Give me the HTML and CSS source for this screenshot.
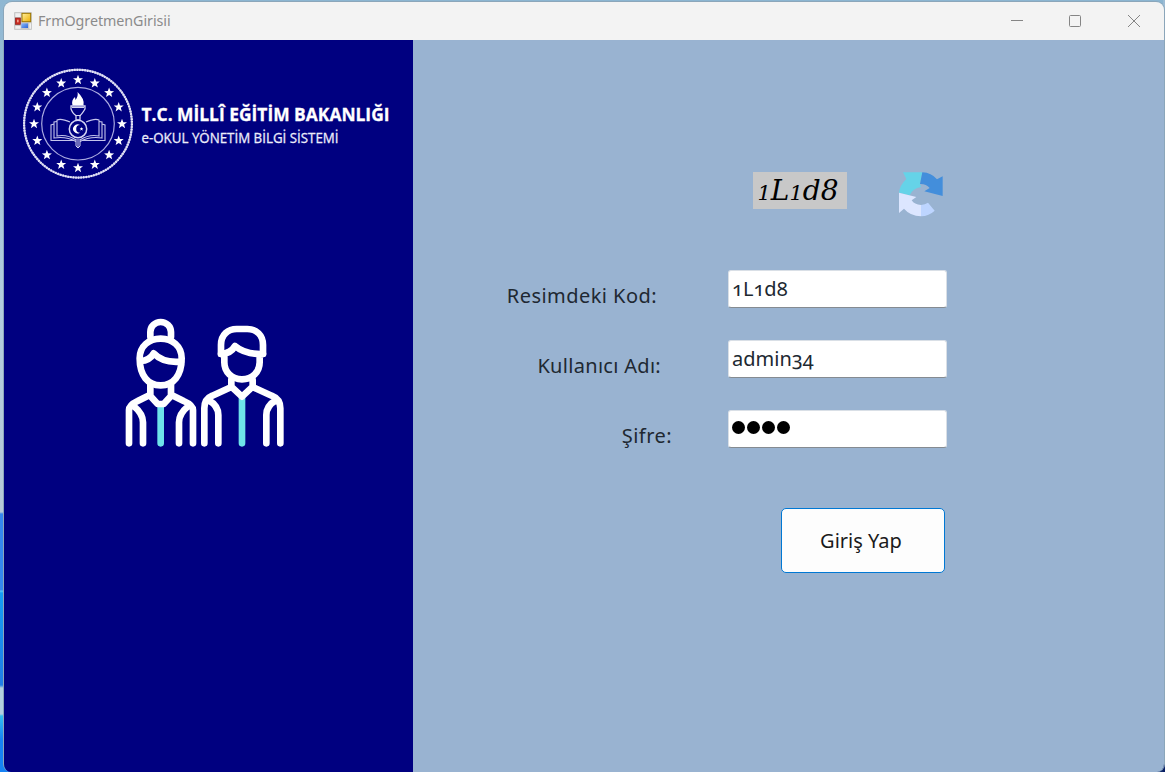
FILE: index.html
```html
<!DOCTYPE html>
<html lang="tr">
<head>
<meta charset="utf-8">
<title>FrmOgretmenGirisii</title>
<link rel="stylesheet" href="styles.css">
</head>
<body>
<div class="window">
  <header class="titlebar">
    <svg class="app-icon" width="18" height="18" viewBox="0 0 54 54">
      <defs>
        <linearGradient id="gold" x2="1" y2="1"><stop stop-color="#fff0a0"/><stop offset="1" stop-color="#edae00"/></linearGradient>
        <linearGradient id="blue" x2="1" y2="1"><stop stop-color="#8bb8fa"/><stop offset="1" stop-color="#2d66d8"/></linearGradient>
      </defs>
      <rect width="54" height="54" rx="3" fill="#c9c9c9"/>
      <path d="M4 4h16v11H4zM4 42h16v8H4zM46 34h5v16h-5z" fill="#f0f0f0"/>
      <rect x="24" y="4" width="26" height="25" fill="url(#gold)" stroke="#a07800" stroke-width="3"/>
      <rect x="4" y="18" width="15" height="19" fill="#c62a20" stroke="#8c1c18" stroke-width="2"/>
      <rect x="9" y="23" width="5" height="8" fill="#f0a090"/>
      <rect x="22" y="34" width="20" height="14" fill="url(#blue)"/>
    </svg>
    <span class="title">FrmOgretmenGirisii</span>
    <svg class="controls" width="130" height="14" viewBox="0 0 130 14" fill="none" stroke="#858585">
      <path d="M0 6.500h12"/>
      <rect x="58.500" y="1.500" width="11" height="11" rx="1"/>
      <path d="M117 1l12 12M129 1l-12 12"/>
    </svg>
  </header>
  <div class="content">
    <aside class="sidebar">
      <svg class="brand" width="390" height="125" viewBox="0 0 390 125">
        <defs><path id="star" d="M0-5.200 1.300-1.700 5-1.600 2.100.7 3.100 4.300 0 2.200-3.100 4.300-2.100.7-5-1.600-1.300-1.700Z"/></defs>
        <g fill="none" stroke="#e7e7f7">
          <circle cx="63" cy="63.700" r="53.900" stroke-width="1.900" stroke="#b9b9e2"/>
          <circle cx="63" cy="63.700" r="53.900" stroke-width="2.200" stroke-dasharray="1.500 1.100"/>
          <circle cx="63" cy="63.700" r="36.300" stroke-width="1.200" stroke="#aaaae0"/>
        </g>
        <g fill="#fff" transform="translate(63 63.900)">
          <use href="#star" x="0" y="-44"/><use href="#star" x="16.800" y="-40.700"/><use href="#star" x="31.100" y="-31.100"/><use href="#star" x="40.700" y="-16.800"/>
          <use href="#star" x="44" y="0"/><use href="#star" x="40.700" y="16.800"/><use href="#star" x="31.100" y="31.100"/><use href="#star" x="16.800" y="40.700"/>
          <use href="#star" x="0" y="44"/><use href="#star" x="-16.800" y="40.700"/><use href="#star" x="-31.100" y="31.100"/><use href="#star" x="-40.700" y="16.800"/>
          <use href="#star" x="-44" y="0"/><use href="#star" x="-40.700" y="-16.800"/><use href="#star" x="-31.100" y="-31.100"/><use href="#star" x="-16.800" y="-40.700"/>
        </g>
        <g fill="none" stroke="#c5c5ec" stroke-width="1.100">
          <path d="M55 62Q46 58 42 60V76Q52 74 61 80M71 62Q80 58 84 60V76Q74 74 65 80"/>
          <path d="M42 61.500 39 62V78Q51 76 61 81.500M84 61.500 87 62V78Q75 76 65 81.500M39 64 36 65V80.500H59M87 64 90 65V80.500H67"/>
        </g>
        <circle cx="63" cy="69" r="8.700" fill="#000080" stroke="#d5d5f2" stroke-width="1.500"/>
        <path d="M65 65.100a4.500 4.500 0 1 0 0 7.600 3.800 3.800 0 1 1 0-7.600z" fill="#fff"/>
        <use href="#star" transform="translate(66.500 69) scale(.38)" fill="#fff"/>
        <path d="M62.500 32Q70 39 68.500 45.500H57.500Q56 40 60 37L60.500 40Q63.500 36 62.500 32Z" fill="#fff"/>
        <path d="M56 46H70V49Q67 54 65 55.500V60H61V55.500Q58 54 56 49Z" fill="none" stroke="#d5d5f2" stroke-width="1.300"/>
        <path d="M57 47.500H69M60 55.500H66M61 79V86L63 88 65 86V79M63 79V87" fill="none" stroke="#d5d5f2"/>
        <g class="brand-text" fill="#fff">
          <text class="ministry" x="126.500" y="60.800" textLength="248" lengthAdjust="spacingAndGlyphs">T.C. MİLLÎ EĞİTİM BAKANLIĞI</text>
          <text class="system" x="126.500" y="82.800" textLength="197" lengthAdjust="spacingAndGlyphs">e-OKUL YÖNETİM BİLGİ SİSTEMİ</text>
        </g>
      </svg>
      <svg class="teachers" width="180" height="145" viewBox="0 0 540 435" fill="none" stroke="#fff" stroke-width="20" stroke-linecap="round" stroke-linejoin="round">
        <path d="M137 290V400M381 265V400" stroke="#6ee3ea"/>
        <path d="M106 80V66a31 30 0 0 1 62 0V80"/>
        <path d="M74 145C74 108 102 86 137 86S200 108 200 145C200 197 175 226 137 226S74 197 74 145Z"/>
        <path d="M76 153Q104 152 116 130Q144 160 198 155"/>
        <path d="M106 222V254L68 273Q42 285 42 300V400M168 222V254L206 273Q234 285 234 300V400M106 258L128 282H146L168 258M56 288Q84 311 84 337V400M220 288Q192 311 192 337V400"/>
        <path d="M318 132V105C318 73 340 57 365 57H397C424 57 444 75 444 105V132"/>
        <path d="M318 132Q347 131 360 108Q391 134 444 132M328 136V157C328 186 350 208 381 208S434 186 434 157V136"/>
        <path d="M349 209V231L292 257Q268 267 268 295V400M413 209V231L470 257Q496 267 496 295V400M349 230 381 260 413 230M280 270Q310 287 310 315V400M484 270Q454 287 454 315V400"/>
      </svg>
    </aside>
    <main class="form">
      <div class="captcha-row">
        <div class="captcha"><span class="code"><span class="low">1</span>L<span class="low">1</span>d8</span></div>
        <svg class="refresh" width="46" height="47" viewBox="475 34 138 141">
          <path d="M490 38H548L541 73L544 82Q519 86 510 107L478 99Q480 77 500 58Z" fill="#65d3e8"/>
          <path d="M548 38Q575 39 592 59L609 50V109L554 95 570 85Q559 72 541 73Z" fill="#438edb"/>
          <path d="M478 99 530 112 516 122Q524 135 544 136V170Q512 169 493 147L478 160Z" fill="#dce6ff"/>
          <path d="M544 136Q556 135 565 129L585 153Q568 169 544 170Z" fill="#bdd5ff"/>
        </svg>
      </div>
      <div class="field">
        <span class="label code-label">Resimdeki Kod:</span>
        <div class="input"><span class="value">1L1d8</span></div>
      </div>
      <div class="field">
        <span class="label user-label">Kullanıcı Adı:</span>
        <div class="input"><span class="value">admin34</span></div>
      </div>
      <div class="field">
        <span class="label pass-label">Şifre:</span>
        <div class="input"><span class="dots"><i></i><i></i><i></i><i></i></span></div>
      </div>
      <button class="submit">Giriş Yap</button>
    </main>
  </div>
</div>
</body>
</html>
```
FILE: styles.css
```css
* { box-sizing: border-box; }
body {
  margin: 0;
  width: 1165px;
  height: 772px;
  overflow: hidden;
  padding: 1px 0 0 3px;
  font-family: "Noto Sans", sans-serif;
  background:
    linear-gradient(#9dbcd4 0 552px, #244f95 553px, #17357e 740px, #071c61) right / 2px 100% no-repeat,
    linear-gradient(#8fb7d2 0, #b2cddf 300px, #b6c9d8 512px, #3587ef 514px 590px, #58c8f5 591px, #159cf4 593px, #207de6 685px, #b2cfe0 688px 714px, #32bdf0 716px, #1682f4 740px) left / 20px 100% no-repeat,
    linear-gradient(#8bb5d1 0 20px, #102a6c 21px);
}
.window {
  width: 1162px;
  height: 771px;
  border: 1px solid #8ba6ba;
  border-bottom: 0;
  border-radius: 9px 9px 8px 8px;
  overflow: hidden;
  display: flex;
  flex-direction: column;
}
.titlebar {
  height: 38px;
  flex: none;
  display: flex;
  align-items: center;
  padding: 0 23px 0 10px;
  background: #f3f3f3;
}
.title {
  margin: -2px 0 0 6px;
  font-size: 14.3px;
  letter-spacing: -.06px;
  color: #8b8b8b;
}
.controls { margin-left: auto; }
.content { flex: 1; display: flex; }
.sidebar {
  width: 409px;
  background: #000080;
  display: flex;
  flex-direction: column;
  align-items: flex-start;
  padding: 20px 0 0 11px;
}
.brand { overflow: visible; }
.brand-text { font-family: "Open Sans", sans-serif; }
.ministry { font-size: 18px; font-weight: 700; stroke: #fff; stroke-width: .3px; }
.system { font-size: 14.5px; fill: #ededfa; stroke: #ededfa; stroke-width: .3px; }
.teachers { margin: 125px 0 0 100px; }
.form {
  flex: 1;
  background: #99b3d1;
  display: flex;
  flex-direction: column;
  align-items: flex-start;
  padding-top: 131px;
  color: #202831;
  font-size: 20px;
}
.captcha-row {
  display: flex;
  align-items: flex-start;
  gap: 51px;
  padding-left: 340px;
  height: 99px;
}
.captcha {
  width: 94px;
  height: 37px;
  margin-top: 1px;
  padding-right: 4px;
  background: #c8c8c8;
  color: #000;
  font: italic 28px/37px "DejaVu Serif", serif;
  text-align: center;
  white-space: nowrap;
}
.code { display: inline-block; }
.low { font-size: 21px; }
.field { display: flex; height: 70px; }
.label {
  width: 315px;
  text-align: right;
  line-height: 51px;
  letter-spacing: .45px;
  white-space: nowrap;
}
.code-label { padding-right: 71px; }
.user-label { padding-right: 67px; letter-spacing: .3px; }
.pass-label { padding-right: 56px; }
.input {
  width: 219px;
  height: 38px;
  padding-left: 3px;
  background: #fff;
  border: 1px solid #d9dfe6;
  border-bottom: 1px solid #858b91;
  border-radius: 3px;
  line-height: 35px;
  font-variant-numeric: oldstyle-nums;
}
.dots { display: flex; gap: 2px; padding-top: 10px; }
.dots i { width: 13px; height: 13px; border-radius: 50%; background: #000; }
.submit {
  width: 164px;
  height: 65px;
  margin: 28px 0 0 368px;
  padding: 0 4px 0 0;
  background: #fdfdfd;
  border: 1px solid #0078d4;
  border-radius: 5px;
  font: 20px "Noto Sans", sans-serif;
  color: #1a1a1a;
}
```
